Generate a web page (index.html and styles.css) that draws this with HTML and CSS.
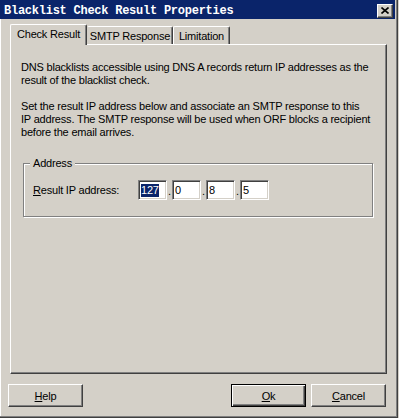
FILE: index.html
```html
<!DOCTYPE html>
<html>
<head>
<meta charset="utf-8">
<title>Blacklist Check Result Properties</title>
<link rel="stylesheet" href="styles.css">
</head>
<body>
<div class="window">
  <div class="titlebar">
    <span class="title">Blacklist Check Result Properties</span>
    <span class="close"><svg width="8" height="7" viewBox="0 0 8 7"><path d="M0.5 0.5 L7.5 6.5 M7.5 0.5 L0.5 6.5" stroke="#000" stroke-width="1.6" fill="none"/></svg></span>
  </div>
  <div class="content">
    <div class="tabs">
      <div class="tab active t1">Check Result</div>
      <div class="tab t2">SMTP Response</div>
      <div class="tab t3">Limitation</div>
    </div>
    <div class="panel">
      <p>DNS blacklists accessible using DNS A records return IP addresses as the<br>result of the blacklist check.</p>
      <p>Set the result IP address below and associate an SMTP response to this<br>IP address. The SMTP response will be used when ORF blocks a recipient<br>before the email arrives.</p>
      <div class="group">
        <span class="legend">Address</span>
        <div class="row">
          <span class="label"><u>R</u>esult IP address:</span>
          <div class="ip">
            <span class="field"><span class="sel">127</span></span><span class="dot">.</span><span class="field">0</span><span class="dot">.</span><span class="field">8</span><span class="dot">.</span><span class="field">5</span>
          </div>
        </div>
      </div>
    </div>
    <div class="footer">
      <button class="btn"><u>H</u>elp</button>
      <span class="spacer"></span>
      <button class="btn default"><u>O</u>k</button>
      <button class="btn"><u>C</u>ancel</button>
    </div>
  </div>
</div>
</body>
</html>
```
FILE: styles.css
```css
html, body {
  margin: 0;
  padding: 0;
  background: #d4d0c8;
}
body {
  font-family: "Liberation Sans", Arial, sans-serif;
  font-size: 11px;
  letter-spacing: -0.2px;
  color: #000;
}
.window {
  width: 398px;
  height: 418px;
  box-sizing: border-box;
  background: #d4d0c8;
  box-shadow: inset -1px -1px 0 #404040, inset -2px -2px 0 #808080, inset 1px 0 0 #fff;
  overflow: hidden;
}
.titlebar {
  width: 395px;
  height: 19px;
  background: #0a246a;
  display: flex;
  align-items: center;
  justify-content: space-between;
}
.title {
  color: #fff;
  font-family: "Liberation Mono", "DejaVu Sans Mono", monospace;
  font-weight: bold;
  font-size: 12px;
  letter-spacing: -0.25px;
  padding-left: 4px;
  padding-top: 2px;
  white-space: nowrap;
}
.close {
  width: 16px;
  height: 14px;
  margin-right: 2px;
  margin-top: 2px;
  box-sizing: border-box;
  background: #d4d0c8;
  border: 1px solid;
  border-color: #fff #404040 #404040 #fff;
  box-shadow: inset -1px -1px 0 #808080;
  display: flex;
  align-items: center;
  justify-content: center;
}
.content {
  padding: 5px 11px 0 10px;
}
.tabs {
  display: flex;
  align-items: flex-end;
  height: 20px;
}
.tab {
  box-sizing: border-box;
  height: 18px;
  border: 1px solid;
  border-bottom: none;
  border-color: #fff #404040 #fff #fff;
  border-radius: 2px 2px 0 0;
  box-shadow: inset -1px 0 0 #808080;
  text-align: center;
  line-height: 18px;
  white-space: nowrap;
  background: #d4d0c8;
}
.tab.active {
  height: 21px;
  margin-bottom: -1px;
  position: relative;
  z-index: 1;
  line-height: 19px;
}
.t1 { width: 77px; }
.t2 { width: 86px; border-left-color: transparent; }
.t3 { width: 57px; }
.panel {
  box-sizing: border-box;
  width: 377px;
  height: 330px;
  border: 1px solid;
  border-color: #fff #404040 #404040 #fff;
  box-shadow: inset -1px -1px 0 #808080;
  padding: 16px 10px 0 10px;
}
.panel p {
  margin: 0 0 13px;
  line-height: 13px;
  white-space: nowrap;
}
.group {
  position: relative;
  margin: 24px 0 0 2px;
  width: 350px;
  height: 54px;
  box-sizing: border-box;
  border: 1px solid #808080;
  box-shadow: 1px 1px 0 #fff, inset 1px 1px 0 #fff;
  padding: 16px 0 0 9px;
}
.legend {
  position: absolute;
  top: -7px;
  left: 6px;
  padding: 0 3px;
  line-height: 13px;
  background: #d4d0c8;
}
.row {
  display: flex;
  align-items: center;
  height: 20px;
}
.label {
  width: 105px;
  flex: none;
  white-space: nowrap;
}
.ip {
  display: flex;
  align-items: stretch;
  height: 20px;
}
.field {
  box-sizing: border-box;
  width: 29px;
  height: 20px;
  background: #fff;
  border: 1px solid;
  border-color: #808080 #fff #fff #808080;
  box-shadow: inset 1px 1px 0 #404040, inset -1px -1px 0 #d4d0c8;
  padding-left: 2px;
  display: flex;
  align-items: center;
  line-height: 13px;
}
.sel {
  background: #0a246a;
  color: #fff;
}
.dot {
  width: 5px;
  text-align: center;
  line-height: 22px;
}
.footer {
  display: flex;
  margin: 10px 1px 0 -2px;
  gap: 5px;
}
.spacer {
  flex: 1;
}
.btn {
  width: 75px;
  height: 23px;
  box-sizing: border-box;
  background: #d4d0c8;
  font-family: "Liberation Sans", Arial, sans-serif;
  font-size: 11px;
  letter-spacing: -0.2px;
  color: #000;
  border: 1px solid;
  border-color: #fff #404040 #404040 #fff;
  box-shadow: inset -1px -1px 0 #808080;
  padding: 0;
  margin: 0;
}
.btn.default {
  border: 1px solid #000;
  box-shadow: inset 1px 1px 0 #fff, inset -1px -1px 0 #404040, inset -2px -2px 0 #808080;
}
```
